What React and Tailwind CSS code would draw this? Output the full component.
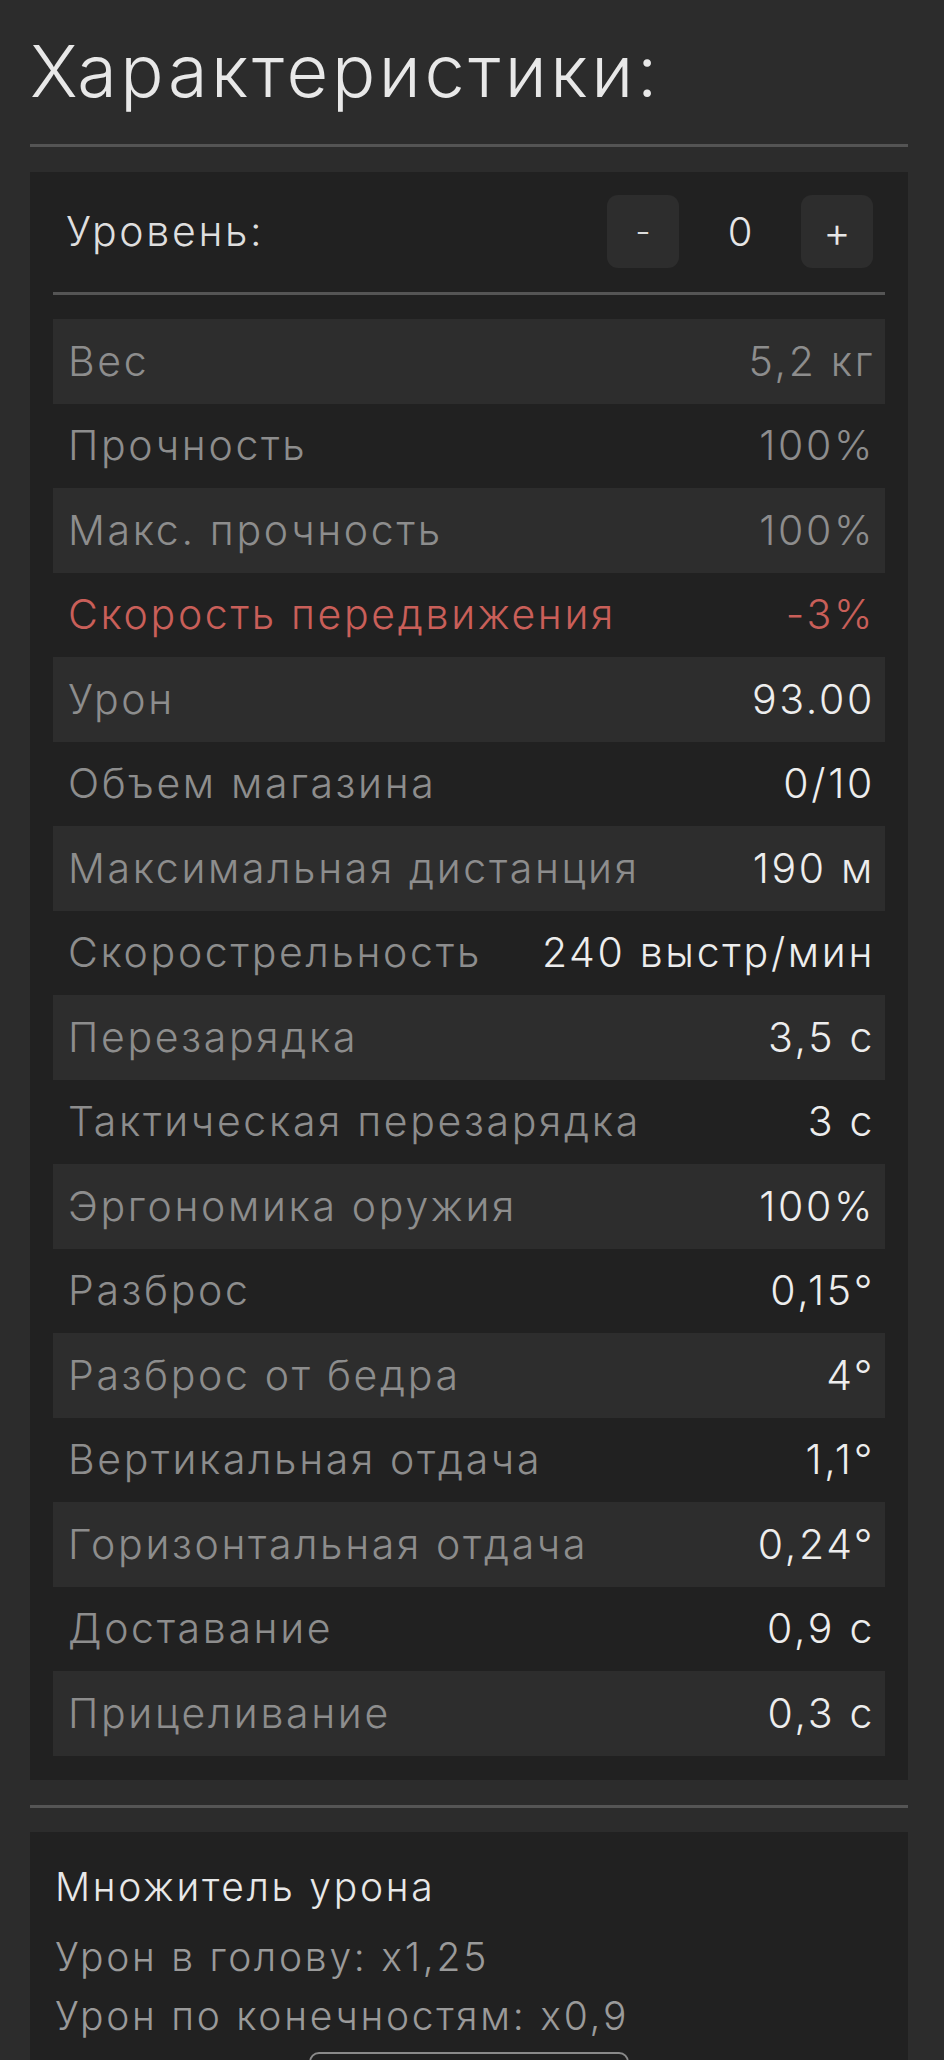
import React from "react";

const stats = [
  { label: "Вес", value: "5,2 кг", tone: "muted" },
  { label: "Прочность", value: "100%", tone: "muted" },
  { label: "Макс. прочность", value: "100%", tone: "muted" },
  { label: "Скорость передвижения", value: "-3%", tone: "bad" },
  { label: "Урон", value: "93.00" },
  { label: "Объем магазина", value: "0/10" },
  { label: "Максимальная дистанция", value: "190 м" },
  { label: "Скорострельность", value: "240 выстр/мин" },
  { label: "Перезарядка", value: "3,5 с" },
  { label: "Тактическая перезарядка", value: "3 с" },
  { label: "Эргономика оружия", value: "100%" },
  { label: "Разброс", value: "0,15°" },
  { label: "Разброс от бедра", value: "4°" },
  { label: "Вертикальная отдача", value: "1,1°" },
  { label: "Горизонтальная отдача", value: "0,24°" },
  { label: "Доставание", value: "0,9 с" },
  { label: "Прицеливание", value: "0,3 с" },
];

function StatRow({ label, value, tone, striped }) {
  const labelColor = tone === "bad" ? "text-[#c95f59]" : "text-[#8d8d8d]";
  const valueColor =
    tone === "bad" ? "text-[#c95f59]" : tone === "muted" ? "text-[#8d8d8d]" : "text-[#ededed]";
  return (
    <div
      className={`flex h-[84.5px] items-center justify-between pl-[15px] pr-[10px] ${
        striped ? "bg-[#2d2d2d]" : ""
      }`}
    >
      <span className={labelColor}>{label}</span>
      <span className={valueColor}>{value}</span>
    </div>
  );
}

export default function App() {
  return (
    <div
      className="min-h-[2060px] bg-[#2c2c2c] pl-[30px] pr-[36px] pt-[35px] font-light"
      style={{ fontFamily: "Inter, 'Noto Sans', sans-serif" }}
    >
      <h1 className="text-[72px] leading-none tracking-[0.05em] text-[#e8e8e8]">Характеристики:</h1>
      <div className="mt-[37px] h-[3px] bg-[#545454]" />

      <section className="mt-[25px] bg-[#212121] px-[23px] pb-[24px] pt-[23px] text-[41px] leading-none tracking-[0.065em]">
        <div className="flex items-center justify-between pl-[13px] pr-[12px]">
          <span className="text-[#dedede]">Уровень:</span>
          <div className="flex items-center tracking-normal">
            <button className="flex h-[73px] w-[72px] items-center justify-center rounded-[11px] bg-[#2d2d2d] text-[34px] text-[#dcdcdc]">
              -
            </button>
            <span className="w-[122px] text-center text-[40px] text-[#e6e6e6]">0</span>
            <button className="flex h-[73px] w-[72px] items-center justify-center rounded-[11px] bg-[#2d2d2d] text-[42px] text-[#e6e6e6]">
              +
            </button>
          </div>
        </div>
        <div className="mt-[24px] h-[3px] bg-[#555555]" />

        <div className="mt-[24px]">
          {stats.map((s, i) => (
            <StatRow key={s.label} {...s} striped={i % 2 === 0} />
          ))}
        </div>
      </section>

      <div className="mt-[25px] h-[3px] bg-[#555555]" />

      <section className="mt-[24px] bg-[#212121] px-[25px] pt-[35px] pb-[40px] text-[39px] leading-none tracking-[0.07em]">
        <h2 className="text-[#e8e8e8]">Множитель урона</h2>
        <p className="mt-[31px] text-[#9a9a9a]">Урон в голову: x1,25</p>
        <p className="mt-[20px] text-[#9a9a9a]">Урон по конечностям: x0,9</p>
        <div className="mx-auto mt-[17px] h-[60px] w-[320px] rounded-[10px] border-2 border-[#8a8a8a]" />
      </section>
    </div>
  );
}
